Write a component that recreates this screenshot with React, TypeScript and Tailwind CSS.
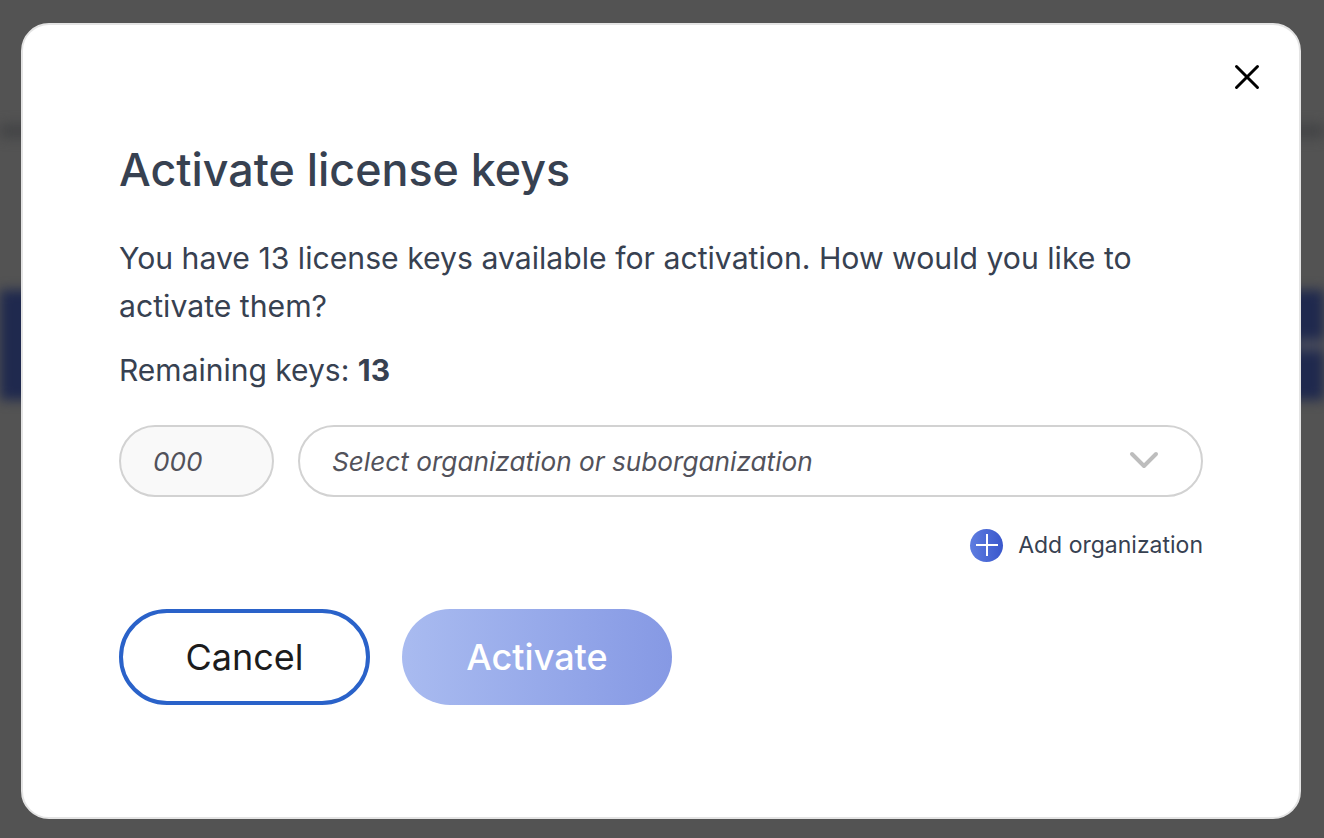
import { X } from 'lucide-react';

const font = { fontFamily: "Inter, 'Noto Sans', sans-serif" };

export default function App() {
  return (
    <div className="relative h-[838px] w-full overflow-hidden bg-[#535353]" style={font}>
      {/* blurred page behind the modal */}
      <div className="flex flex-col blur-[6px]">
        <div className="h-[124px]" />
        <div className="h-[14px] bg-[#434446]" />
        <div className="h-[152px]" />
        <div className="flex h-[110px] items-center justify-end bg-[#1f294e]">
          <div className="h-[12px] w-[30px] bg-[#4a4d5c]" />
        </div>
      </div>

      {/* modal */}
      <div className="absolute left-[21px] top-[23px] h-[796px] w-[1280px] rounded-[28px] border-2 border-[#e4e4e4] bg-white pl-[96px] pr-[96px] pt-[119px]">
        <button className="absolute right-[31px] top-[31px] text-black">
          <X size={42} strokeWidth={1.7} />
        </button>

        <h2 className="text-[44.8px] font-medium leading-[52px] text-[#374151]">
          Activate license keys
        </h2>
        <p className="mt-[38px] w-[1060px] text-[30.2px] leading-[48px] text-[#374151]">
          You have 13 license keys available for activation. How would you like to activate them?
        </p>
        <p className="mt-[16px] text-[30px] leading-[48px] text-[#374151]">
          Remaining keys: <span className="font-bold">13</span>
        </p>

        <div className="mt-[31px] flex gap-[24px]">
          <div className="flex h-[72px] w-[155px] items-center rounded-full border-2 border-[#d2d2d2] bg-[#f9f9f9] pl-[32px] pt-[2px] text-[26.2px] italic text-[#52525b]">
            000
          </div>
          <div className="flex h-[72px] flex-1 items-center justify-between rounded-full border-2 border-[#d2d2d2] bg-white pl-[32px] pr-[41px] text-[26.2px] italic text-[#52525b]">
            <span className="pt-[2px]">Select organization or suborganization</span>
            <svg width="32" height="20" viewBox="0 0 32 20" fill="none" stroke="#bdbdbd" strokeWidth="4" strokeLinecap="round" strokeLinejoin="round">
              <path d="M4 3l12 12L28 3" />
            </svg>
          </div>
        </div>

        <div className="mt-[31px] flex items-center justify-end gap-[15px]">
          <span className="flex h-[33px] w-[33px] items-center justify-center rounded-full bg-gradient-to-r from-[#5f7de0] to-[#3a57cc] text-white">
            <svg width="24" height="24" viewBox="0 0 24 24" fill="none" stroke="currentColor" strokeWidth="2">
              <path d="M12 1v22M1 12h22" />
            </svg>
          </span>
          <span className="text-[23px] leading-[34px] text-[#374151]">Add organization</span>
        </div>

        <div className="mt-[47px] flex gap-[32px]">
          <button className="h-[96px] w-[251px] rounded-full border-[4px] border-[#2a62c9] bg-white text-[36px] font-normal text-[#1c1c1c]">
            Cancel
          </button>
          <button className="h-[96px] w-[270px] rounded-full bg-gradient-to-r from-[#a9bbf0] to-[#8699e4] text-[36px] font-medium text-white">
            Activate
          </button>
        </div>
      </div>
    </div>
  );
}
